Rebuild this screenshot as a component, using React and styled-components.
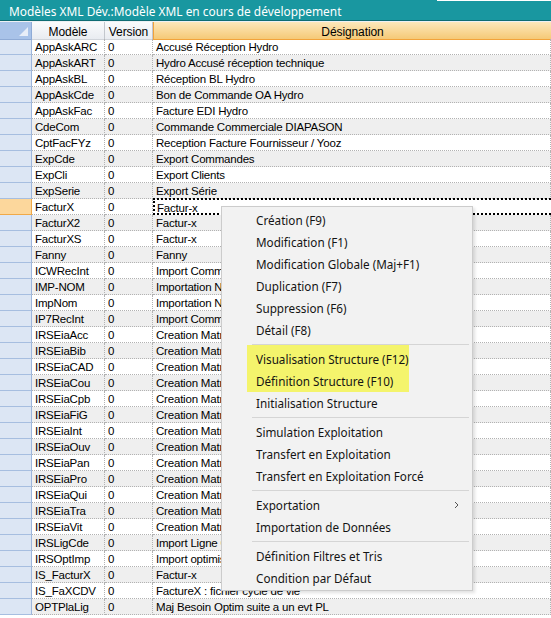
import React from 'react'
import styled, { createGlobalStyle } from 'styled-components'

const GlobalStyle = createGlobalStyle`
  html, body {
    margin: 0;
    padding: 0;
    background: #fff;
    overflow: hidden;
  }
  body {
    font-family: "Liberation Sans", Arial, sans-serif;
  }
`

const Window = styled.div`
  width: 551px;
  height: 618px;
  overflow: hidden;
  position: relative;
  background: #fff;
`

const TitleBar = styled.div`
  height: 20px;
  background: #1997a0;
  border-bottom: 1px solid #0f6c73;
  color: #fff;
  font-family: "Noto Sans", "Open Sans", sans-serif;
  font-size: 11.9px;
  line-height: 22px;
  padding-left: 9px;
  white-space: nowrap;
  overflow: hidden;
  position: relative;

  &::after {
    content: '';
    position: absolute;
    top: 0;
    left: 437px;
    right: 0;
    height: 1px;
    background: #fff;
  }
`

const cols = '32px 73px 48px 1fr'

const HeaderRow = styled.div`
  display: grid;
  grid-template-columns: ${cols};
  height: 17px;
  border-top: 1px solid #eef1f4;
`

const HeadCell = styled.div`
  display: flex;
  align-items: center;
  justify-content: center;
  padding-top: 3px;
  font-size: 12px;
  letter-spacing: -0.1px;
  color: #000;
  border-right: 1px solid #c3c7cd;
  border-bottom: 1px solid #d0d4da;
  background: linear-gradient(#fafbfc, #e9ecf1);
  ${(p) =>
    p.$active &&
    `
    background: linear-gradient(#fde8bb, #f5c977);
    border-left: 1px solid #f2a33b;
    border-right: none;
    border-bottom: 1px solid #f2a33b;
  `}
`

const Corner = styled.div`
  position: relative;
  background: #a9c3e9;
  border-right: 1px solid #8fabd6;
  border-bottom: 1px solid #8fabd6;

  &::after {
    content: '';
    position: absolute;
    right: 3px;
    bottom: 3px;
    width: 0;
    height: 0;
    border-left: 9px solid transparent;
    border-bottom: 9px solid #e8eef8;
  }
`

const Row = styled.div`
  display: grid;
  grid-template-columns: ${cols};
  grid-template-rows: 16px;
  height: 16px;
  background: ${(p) => (p.$alt ? '#efefef' : '#fff')};
`

const Selector = styled.div`
  background: ${(p) => (p.$current ? '#fcd79c' : '#dce6f4')};
  border-right: 1px solid ${(p) => (p.$current ? '#f0a948' : '#9db6dc')};
  border-bottom: 1px solid ${(p) => (p.$current ? '#f0a948' : '#a6bee0')};
`

const Cell = styled.div`
  font-size: 11.5px;
  letter-spacing: -0.2px;
  line-height: 13px;
  padding-top: 2px;
  color: #000;
  padding-left: 3px;
  white-space: nowrap;
  overflow-x: clip;
  border-right: 1px dotted #b2b2b2;
  border-bottom: 1px dotted #b2b2b2;
  ${(p) =>
    p.$focus &&
    `
    border: 2px dotted #000;
    border-right: none;
    margin-top: -1px;
    padding-top: 2px;
    padding-left: 2px;
  `}
`

const Menu = styled.div`
  position: absolute;
  left: 221px;
  top: 206px;
  width: 250px;
  padding: 2px 0 1px;
  background: #f2f2f2;
  border: 1px solid #cccccc;
  box-shadow: 2px 2px 3px rgba(0, 0, 0, 0.12);
  font-family: "Noto Sans", "Open Sans", sans-serif;
`

const Item = styled.div`
  height: 22px;
  display: flex;
  align-items: center;
  justify-content: space-between;
  padding-left: ${(p) => (p.$inset ? 9 : 34)}px;
  padding-right: 13px;
  font-size: 11.7px;
  color: #141414;
  white-space: nowrap;
`

const Highlight = styled.div`
  margin-left: 25px;
  width: 162px;
  padding-top: 3px;
  background: #f4f46c;
`

const Separator = styled.div`
  height: ${(p) => (p.$short ? 4 : 7)}px;
  margin: 0 3px 0 30px;
  display: flex;
  align-items: ${(p) => (p.$short ? 'flex-end' : 'center')};

  &::before {
    content: '';
    flex: 1;
    height: 1px;
    background: #d5d5d5;
  }
`

const Chevron = () => (
  <svg width="5" height="8" viewBox="0 0 5 8">
    <path d="M1 1l3 3-3 3" fill="none" stroke="#555" strokeWidth="1" />
  </svg>
)

const rows = [
  ['AppAskARC', 'Accusé Réception Hydro'],
  ['AppAskART', 'Hydro Accusé réception technique'],
  ['AppAskBL', 'Réception BL Hydro'],
  ['AppAskCde', 'Bon de Commande OA Hydro'],
  ['AppAskFac', 'Facture EDI Hydro'],
  ['CdeCom', 'Commande Commerciale DIAPASON'],
  ['CptFacFYz', 'Reception Facture Fournisseur / Yooz'],
  ['ExpCde', 'Export Commandes'],
  ['ExpCli', 'Export Clients'],
  ['ExpSerie', 'Export Série'],
  ['FacturX', 'Factur-x'],
  ['FacturX2', 'Factur-x'],
  ['FacturXS', 'Factur-x'],
  ['Fanny', 'Fanny'],
  ['ICWRecInt', 'Import Commandes Web'],
  ['IMP-NOM', 'Importation Nomenclature'],
  ['ImpNom', 'Importation Nomenclature'],
  ['IP7RecInt', 'Import Commandes P7'],
  ['IRSEiaAcc', 'Creation Matrice Accessoires'],
  ['IRSEiaBib', 'Creation Matrice Bibliothèque'],
  ['IRSEiaCAD', 'Creation Matrice CAD'],
  ['IRSEiaCou', 'Creation Matrice Couleurs'],
  ['IRSEiaCpb', 'Creation Matrice Compatibilité'],
  ['IRSEiaFiG', 'Creation Matrice Finition'],
  ['IRSEiaInt', 'Creation Matrice Intérieur'],
  ['IRSEiaOuv', 'Creation Matrice Ouvrants'],
  ['IRSEiaPan', 'Creation Matrice Panneaux'],
  ['IRSEiaPro', 'Creation Matrice Profils'],
  ['IRSEiaQui', 'Creation Matrice Quincaillerie'],
  ['IRSEiaTra', 'Creation Matrice Traverses'],
  ['IRSEiaVit', 'Creation Matrice Vitrages'],
  ['IRSLigCde', 'Import Ligne Commande'],
  ['IRSOptImp', 'Import optimisation'],
  ['IS_FacturX', 'Factur-x'],
  ['IS_FaXCDV', 'FactureX : fichier cycle de vie'],
  ['OPTPlaLig', 'Maj Besoin Optim  suite a un evt PL'],
]

const CURRENT = 10

export default function App() {
  return (
    <Window>
      <GlobalStyle />
      <TitleBar>Modèles XML Dév.:Modèle XML en cours de développement</TitleBar>
      <HeaderRow>
        <Corner />
        <HeadCell>Modèle</HeadCell>
        <HeadCell>Version</HeadCell>
        <HeadCell $active>Désignation</HeadCell>
      </HeaderRow>
      {rows.map(([code, label], i) => (
        <Row key={code} $alt={i % 2 === 1}>
          <Selector $current={i === CURRENT} />
          <Cell>{code}</Cell>
          <Cell>0</Cell>
          <Cell $focus={i === CURRENT}>{label}</Cell>
        </Row>
      ))}

      <Menu>
        <Item>Création (F9)</Item>
        <Item>Modification (F1)</Item>
        <Item>Modification Globale (Maj+F1)</Item>
        <Item>Duplication (F7)</Item>
        <Item>Suppression (F6)</Item>
        <Item>Détail (F8)</Item>
        <Separator $short />
        <Highlight>
          <Item $inset>Visualisation Structure (F12)</Item>
          <Item $inset>Définition Structure (F10)</Item>
        </Highlight>
        <Item>Initialisation Structure</Item>
        <Separator />
        <Item>Simulation Exploitation</Item>
        <Item>Transfert en Exploitation</Item>
        <Item>Transfert en Exploitation Forcé</Item>
        <Separator />
        <Item>
          Exportation
          <Chevron />
        </Item>
        <Item>Importation de Données</Item>
        <Separator />
        <Item>Définition Filtres et Tris</Item>
        <Item>Condition par Défaut</Item>
      </Menu>
    </Window>
  )
}
